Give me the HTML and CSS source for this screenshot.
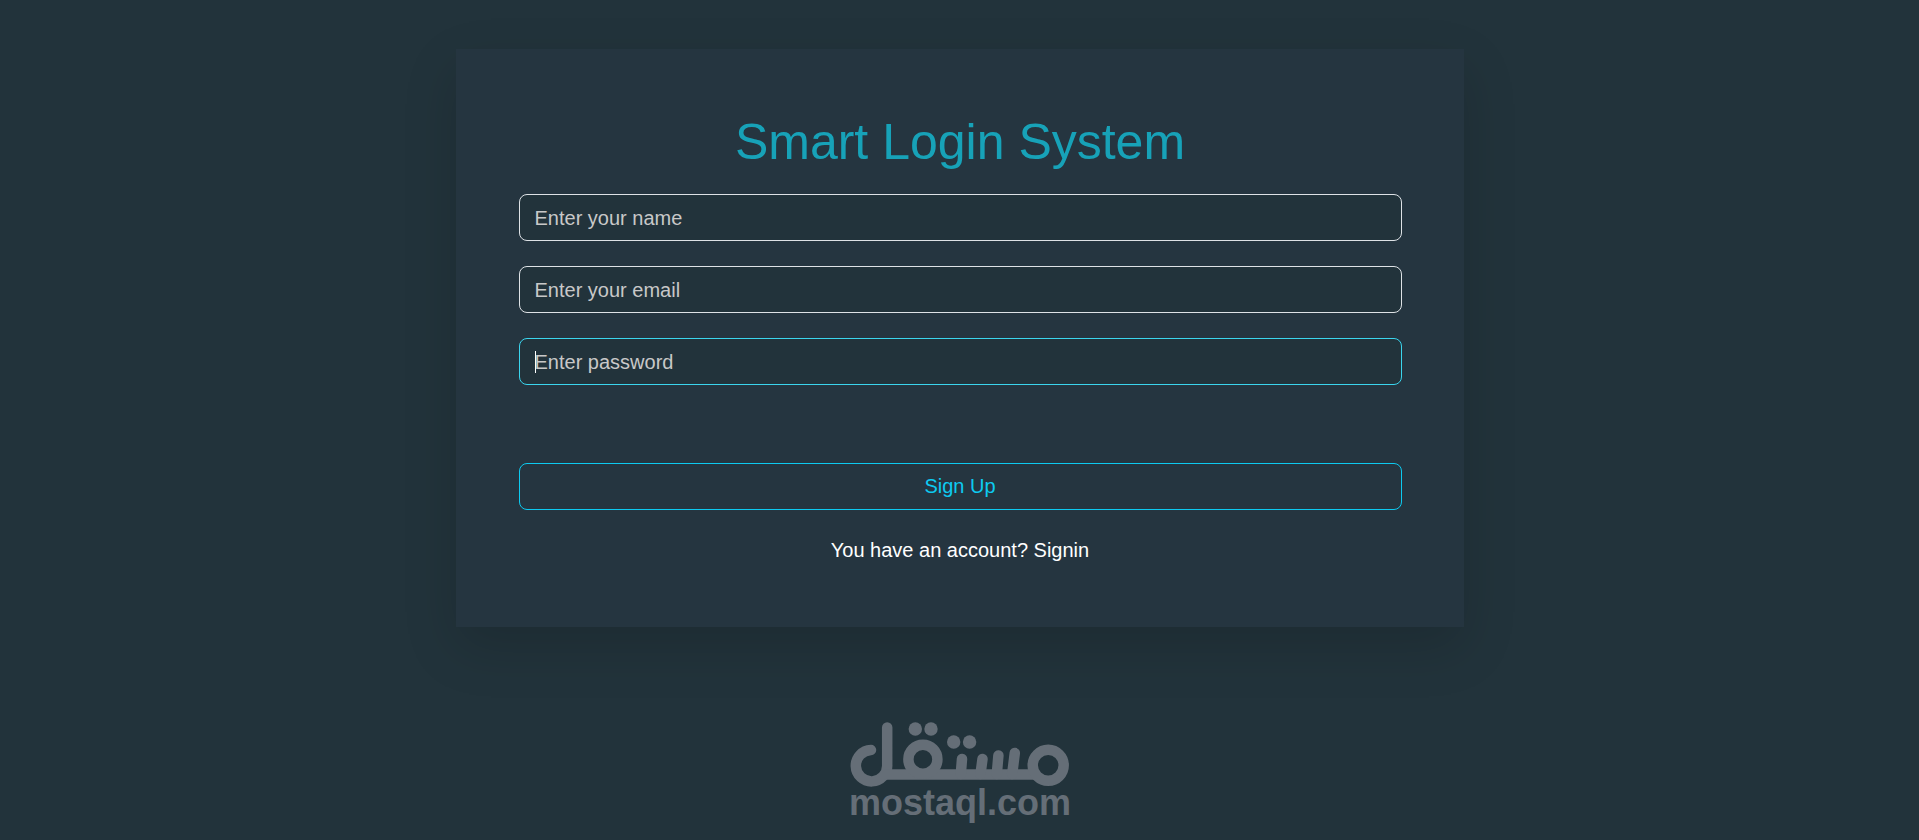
FILE: index.html
```html
<!DOCTYPE html>
<html lang="en">
<head>
  <meta charset="UTF-8" />
  <meta name="viewport" content="width=device-width, initial-scale=1.0"/>
  <title>Smart Login System</title>
  <link rel="stylesheet" href="styles.css">
</head>
<body>
  <main class="signup-box">
    <h1>Smart Login System</h1>
    <form class="signup-form">
      <input type="text" id="signupName" placeholder="Enter your name" aria-label="Name" />
      <input type="email" id="signupEmail" placeholder="Enter your email" aria-label="Email" />
      <input type="password" id="signupPassword" placeholder="Enter password" aria-label="Password" autofocus />
      <button type="submit" class="signup-btn">Sign Up</button>
    </form>
    <p class="signin-text">You have an account? <a href="index.html">Signin</a></p>
  </main>

  <!-- Site logo -->
  <footer class="site-logo">
    <svg width="222" height="104" viewBox="0 0 222 104" role="img" aria-label="mostaql.com">
      <g class="logo-lines">
        <path d="M22 29A15.7 15.7 0 1 0 38.2 44V6.4" />
        <path class="flat" d="M35 53.5H187" />
        <circle cx="73.9" cy="38.3" r="14.5" />
        <path d="M113 38L111.8 53M133.5 38L131.5 53M149.4 34.5L147.8 53M165.8 32L163.2 53" />
        <circle cx="199.2" cy="44.3" r="15.5" />
      </g>
      <g class="logo-fill">
        <circle cx="66.3" cy="8" r="6.7" />
        <circle cx="82" cy="8" r="6.7" />
        <circle cx="104.7" cy="21" r="6.7" />
        <circle cx="120.6" cy="21" r="6.7" />
      </g>
      <text class="logo-text" x="111" y="94" text-anchor="middle">mostaql.com</text>
    </svg>
  </footer>

  <script>
    document.getElementById('signupPassword').focus();

    document.querySelector('.signup-form').addEventListener('submit', (e) => {
      e.preventDefault();
    });
  </script>
</body>
</html>
```

FILE: styles.css
```css
* {
  margin: 0;
  padding: 0;
  box-sizing: border-box;
}

body {
  font-family: "Liberation Sans", Arial, sans-serif;
  font-size: 20px;
  line-height: 30px;
  min-height: 100vh;
  display: flex;
  flex-direction: column;
  align-items: center;
  padding: 49px 16px 15px;
  background-color: #22333b;
  color: #fff;
}

.signup-box {
  width: 100%;
  max-width: 1008px;
  padding: 63px 62px 62px 63px;
  background-color: #253540;
  box-shadow: 0 20px 50px rgba(0, 0, 0, 0.15);
  text-align: center;
}

h1 {
  margin-bottom: 22px;
  font-size: 50px;
  font-weight: 400;
  line-height: 60px;
  color: #17a2b8;
}

.signup-form input,
.signup-btn {
  display: block;
  width: 100%;
  height: 47px;
  border-radius: 8px;
  font-family: inherit;
  font-size: 20px;
}

.signup-form input {
  margin-bottom: 25px;
  padding: 2px 15px 0;
  border: 1px solid #dee2e6;
  background-color: #22333b;
  color: #fff;
  outline: none;
}

.signup-form input::placeholder {
  color: #c8c8c8;
  opacity: 1;
}

.signup-form input:focus {
  border-color: #3bd5ee;
}

/* Solid caret while the focused field is empty */
.signup-form input:focus:placeholder-shown {
  caret-color: transparent;
  background-image: linear-gradient(#fff, #fff);
  background-repeat: no-repeat;
  background-size: 1px 22px;
  background-position: 15px 12px;
}

.signup-btn {
  margin-top: 78px;
  border: 1px solid #0dcaf0;
  background-color: transparent;
  color: #0dcaf0;
  cursor: pointer;
}

.signup-btn:hover {
  background-color: #0dcaf0;
  color: #22333b;
}

.signin-text {
  margin-top: 25px;
}

.signin-text a {
  color: #fff;
  text-decoration: none;
}

/* Logo */
.site-logo {
  margin-top: auto;
}

.site-logo svg {
  display: block;
}

.logo-lines {
  fill: none;
  stroke: #656e77;
  stroke-width: 10.5;
  stroke-linecap: round;
}

.logo-lines .flat {
  stroke-linecap: butt;
}

.logo-fill {
  fill: #656e77;
}

.logo-text {
  font-size: 36px;
  font-weight: 700;
  fill: #656e77;
}
```
